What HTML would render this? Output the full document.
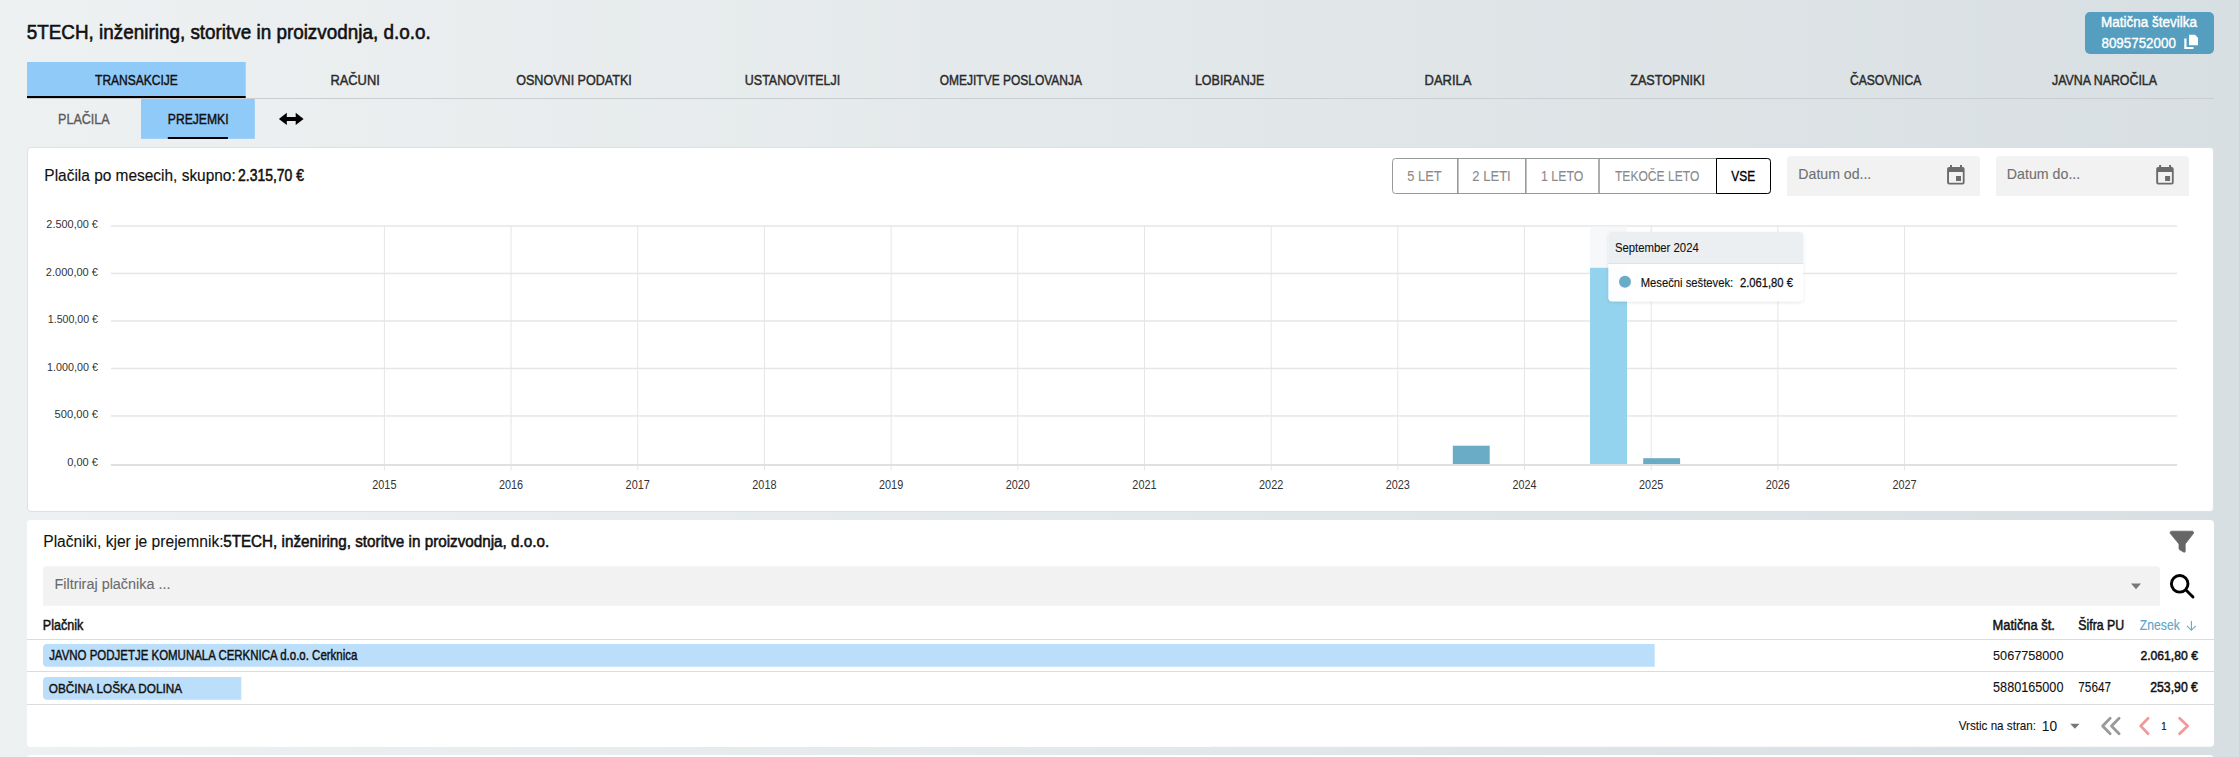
<!DOCTYPE html>
<html><head><meta charset="utf-8"><title>5TECH</title>
<style>
html,body{margin:0;padding:0;width:2239px;height:757px;overflow:hidden;}
body{background:linear-gradient(90deg,#eef1f2 0%,#d8dfe2 100%);font-family:"Liberation Sans",sans-serif;}
svg{position:absolute;left:0;top:0;}
text{font-family:"Liberation Sans",sans-serif;}
</style></head><body>
<svg width="2239" height="757" viewBox="0 0 2239 757">
<defs>
  <filter id="tsh" x="-10%" y="-20%" width="120%" height="150%">
    <feDropShadow dx="0" dy="1" stdDeviation="1.5" flood-color="#000" flood-opacity="0.12"/>
  </filter>
</defs>
<!-- badge -->
<rect x="2085" y="12" width="129" height="42" rx="5" fill="#559ebf"/>
<path d="M2185.4 38.5 V48 H2193.5" fill="none" stroke="#fff" stroke-width="2.2"/>
<path d="M2189 34.7 H2195 L2198 37.7 V45.3 H2189 Z" fill="#fff"/>

<!-- tabs -->
<rect x="27" y="62" width="218.7" height="34" fill="#90caf9"/>
<rect x="27" y="98" width="2187" height="1" fill="#c9ced2"/>
<rect x="27" y="96" width="218.7" height="2" fill="#000"/>
<rect x="141" y="99" width="113.8" height="39.8" fill="#90caf9"/>
<rect x="167.8" y="137" width="60.1" height="2" fill="#000"/>
<!-- double arrow -->
<path d="M278.9 118.9 L286.8 112.7 V117 H295.7 V112.7 L303.6 118.9 L295.7 125 V120.9 H286.8 V125 Z" fill="#000"/>

<!-- chart card -->
<rect x="27.5" y="147.5" width="2186" height="364" rx="3.5" fill="#fff" stroke="#e0e0e0" stroke-width="1"/>
<!-- button group -->
<rect x="1392.5" y="158.5" width="378" height="35" rx="3" fill="#fff" stroke="#999" stroke-width="1"/>
<rect x="1457" y="158.5" width="1.6" height="35" fill="#999"/>
<rect x="1525" y="158.5" width="1.6" height="35" fill="#999"/>
<rect x="1598.2" y="158.5" width="1.6" height="35" fill="#999"/>
<path d="M1716.5 158.5 H1767.5 A3 3 0 0 1 1770.5 161.5 V190.5 A3 3 0 0 1 1767.5 193.5 H1716.5 Z" fill="#fff" stroke="#000" stroke-width="1"/>
<!-- date inputs -->
<path d="M1787 160 A4 4 0 0 1 1791 156 H1976 A4 4 0 0 1 1980 160 V196 H1787 Z" fill="#f2f2f2"/>
<path d="M1996 160 A4 4 0 0 1 2000 156 H2185 A4 4 0 0 1 2189 160 V196 H1996 Z" fill="#f2f2f2"/>
<g id="cal1" fill="#6b6b6b">
  <path d="M1947.1 169 A2 2 0 0 1 1949.1 167 H1962.6 A2 2 0 0 1 1964.6 169 V182.6 A2 2 0 0 1 1962.6 184.6 H1949.1 A2 2 0 0 1 1947.1 182.6 Z M1949 172 V182.8 H1962.8 V172 Z" fill-rule="evenodd"/>
  <rect x="1950" y="165" width="2" height="3"/>
  <rect x="1960" y="165" width="2" height="3"/>
  <rect x="1956" y="176" width="5" height="5"/>
</g>
<use href="#cal1" x="209.1" y="0"/>

<!-- grid -->
<g fill="#e6e6e6">
  <rect x="111" y="225.2" width="2066" height="1.5"/>
  <rect x="111" y="272.7" width="2066" height="1.5"/>
  <rect x="111" y="320.2" width="2066" height="1.5"/>
  <rect x="111" y="367.7" width="2066" height="1.5"/>
  <rect x="111" y="415.2" width="2066" height="1.5"/>
</g>
<g fill="#e6e6e6" id="vgrid">
<rect x="383.90" y="226" width="1" height="244.6"/>
<rect x="510.58" y="226" width="1" height="244.6"/>
<rect x="637.26" y="226" width="1" height="244.6"/>
<rect x="763.94" y="226" width="1" height="244.6"/>
<rect x="890.62" y="226" width="1" height="244.6"/>
<rect x="1017.30" y="226" width="1" height="244.6"/>
<rect x="1143.98" y="226" width="1" height="244.6"/>
<rect x="1270.66" y="226" width="1" height="244.6"/>
<rect x="1397.34" y="226" width="1" height="244.6"/>
<rect x="1524.02" y="226" width="1" height="244.6"/>
<rect x="1650.70" y="226" width="1" height="244.6"/>
<rect x="1777.38" y="226" width="1" height="244.6"/>
<rect x="1904.06" y="226" width="1" height="244.6"/>
</g>
<rect x="1590" y="226.5" width="37" height="41.5" fill="#f6f8fa"/>
<rect x="1452.8" y="445.7" width="36.9" height="18.3" fill="#6aabc6"/>
<rect x="1590" y="267.8" width="37" height="196.2" fill="#94d3ee"/>
<rect x="1643.2" y="458.2" width="36.9" height="5.8" fill="#6aabc6"/>
<rect x="111" y="464" width="2066" height="2" fill="#e0e0e0"/>

<!-- tooltip -->
<g filter="url(#tsh)">
  <rect x="1608.3" y="232.1" width="195" height="69.3" rx="4" fill="#fff" fill-opacity="0.97"/>
</g>
<path d="M1608.3 263.4 V236.1 A4 4 0 0 1 1612.3 232.1 H1799.3 A4 4 0 0 1 1803.3 236.1 V263.4 Z" fill="#eceff1"/>
<rect x="1608.3" y="263" width="195" height="1" fill="#dfe3e6"/>
<circle cx="1625" cy="281.8" r="6" fill="#6aabc6"/>

<!-- table card -->
<rect x="27" y="520" width="1187" height="227" rx="4" fill="#fff"/>
<rect x="27" y="520" width="2187" height="226.8" rx="4" fill="#fff"/>
<rect x="27" y="755" width="2187" height="10" rx="4" fill="#fff"/>
<!-- filter funnel -->
<path d="M2171.5 531.2 H2192.2 A1.5 1.5 0 0 1 2193.3 533.6 L2185.2 544 V551.3 A1 1 0 0 1 2184 552.2 L2179.8 549.8 A1.5 1.5 0 0 1 2179 548.5 V544 L2170.4 533.6 A1.5 1.5 0 0 1 2171.5 531.2 Z" fill="#666" stroke="#666" stroke-width="0.8" stroke-linejoin="round"/>
<!-- filter input -->
<path d="M43 570.2 A4 4 0 0 1 47 566.2 H2156 A4 4 0 0 1 2160 570.2 V605.8 H43 Z" fill="#f2f2f2"/>
<path d="M2131 583.4 H2141 L2136 589.2 Z" fill="#777"/>
<!-- search -->
<circle cx="2179.7" cy="583.8" r="8.3" fill="none" stroke="#000" stroke-width="2.9"/>
<path d="M2186.2 590.3 L2193 597" stroke="#000" stroke-width="2.9" stroke-linecap="round"/>
<!-- table lines -->
<rect x="27" y="639" width="2187" height="1" fill="#dcdcdc"/>
<rect x="27" y="671" width="2187" height="1" fill="#dcdcdc"/>
<rect x="27" y="704" width="2187" height="1" fill="#dcdcdc"/>
<!-- sort arrow -->
<path d="M2191.4 621.1 V630.3 M2187 625.9 L2191.4 630.3 L2195.8 625.9" fill="none" stroke="#6aabcb" stroke-width="1.15"/>
<!-- row bars -->
<path d="M43 648 A4 4 0 0 1 47 644 H1654.7 V666.8 H47 A4 4 0 0 1 43 662.8 Z" fill="#bbdefb"/>
<path d="M43 681 A4 4 0 0 1 47 677 H241.3 V699.8 H47 A4 4 0 0 1 43 695.8 Z" fill="#bbdefb"/>
<!-- pagination -->
<path d="M2070.2 723.8 H2079.6 L2074.9 728.7 Z" fill="#777"/>
<g fill="none" stroke-width="2.8" stroke-linecap="round" stroke-linejoin="round">
  <path d="M2110.2 718.3 L2102.6 725.9 L2110.2 733.7 M2119.1 718.3 L2111.5 725.9 L2119.1 733.7" stroke="#9a9a9a"/>
  <path d="M2148.1 718.3 L2140.6 725.9 L2148.1 733.7" stroke="#f09a9a"/>
  <path d="M2179.6 718.3 L2187.7 725.9 L2179.6 733.7" stroke="#f09a9a"/>
</g>

<text x="26.74" y="39.40" font-size="20.43" font-weight="400" fill="#111" stroke="#111" stroke-width="0.6" textLength="403.91" lengthAdjust="spacingAndGlyphs">5TECH, inženiring, storitve in proizvodnja, d.o.o.</text>
<text x="2100.92" y="27.20" font-size="14.49" font-weight="400" fill="#fff" stroke="#fff" stroke-width="0.4" textLength="96.03" lengthAdjust="spacingAndGlyphs">Matična številka</text>
<text x="2101.46" y="48.00" font-size="14.49" font-weight="400" fill="#fff" stroke="#fff" stroke-width="0.35" textLength="74.42" lengthAdjust="spacingAndGlyphs">8095752000</text>
<text x="95.11" y="85.10" font-size="14.93" font-weight="400" fill="#111" stroke="#111" stroke-width="0.45" textLength="82.74" lengthAdjust="spacingAndGlyphs">TRANSAKCIJE</text>
<text x="330.42" y="85.10" font-size="14.93" font-weight="400" fill="#2a2a2a" stroke="#2a2a2a" stroke-width="0.45" textLength="49.36" lengthAdjust="spacingAndGlyphs">RAČUNI</text>
<text x="516.18" y="85.10" font-size="14.93" font-weight="400" fill="#2a2a2a" stroke="#2a2a2a" stroke-width="0.45" textLength="115.67" lengthAdjust="spacingAndGlyphs">OSNOVNI PODATKI</text>
<text x="744.87" y="85.10" font-size="14.93" font-weight="400" fill="#2a2a2a" stroke="#2a2a2a" stroke-width="0.45" textLength="95.33" lengthAdjust="spacingAndGlyphs">USTANOVITELJI</text>
<text x="939.71" y="85.10" font-size="14.93" font-weight="400" fill="#2a2a2a" stroke="#2a2a2a" stroke-width="0.45" textLength="142.30" lengthAdjust="spacingAndGlyphs">OMEJITVE POSLOVANJA</text>
<text x="1194.90" y="85.10" font-size="14.93" font-weight="400" fill="#2a2a2a" stroke="#2a2a2a" stroke-width="0.45" textLength="69.42" lengthAdjust="spacingAndGlyphs">LOBIRANJE</text>
<text x="1424.61" y="85.10" font-size="14.93" font-weight="400" fill="#2a2a2a" stroke="#2a2a2a" stroke-width="0.45" textLength="46.80" lengthAdjust="spacingAndGlyphs">DARILA</text>
<text x="1630.22" y="85.10" font-size="14.93" font-weight="400" fill="#2a2a2a" stroke="#2a2a2a" stroke-width="0.45" textLength="74.79" lengthAdjust="spacingAndGlyphs">ZASTOPNIKI</text>
<text x="1849.89" y="85.10" font-size="14.93" font-weight="400" fill="#2a2a2a" stroke="#2a2a2a" stroke-width="0.45" textLength="71.47" lengthAdjust="spacingAndGlyphs">ČASOVNICA</text>
<text x="2052.12" y="85.10" font-size="14.93" font-weight="400" fill="#2a2a2a" stroke="#2a2a2a" stroke-width="0.45" textLength="104.85" lengthAdjust="spacingAndGlyphs">JAVNA NAROČILA</text>
<text x="58.10" y="124.10" font-size="14.49" font-weight="400" fill="#5a5a5a" stroke="#5a5a5a" stroke-width="0.35" textLength="51.62" lengthAdjust="spacingAndGlyphs">PLAČILA</text>
<text x="167.78" y="124.10" font-size="14.49" font-weight="400" fill="#111" stroke="#111" stroke-width="0.45" textLength="60.79" lengthAdjust="spacingAndGlyphs">PREJEMKI</text>
<text x="44.36" y="180.60" font-size="15.72" font-weight="400" fill="#111" stroke="#111" stroke-width="0.15" textLength="191.39" lengthAdjust="spacingAndGlyphs">Plačila po mesecih, skupno:</text>
<text x="238.05" y="180.60" font-size="15.72" font-weight="400" fill="#111" stroke="#111" stroke-width="0.55" textLength="65.85" lengthAdjust="spacingAndGlyphs">2.315,70 €</text>
<text x="1407.29" y="181.10" font-size="14.93" font-weight="400" fill="#8a8a8a" stroke="#8a8a8a" stroke-width="0.1" textLength="34.28" lengthAdjust="spacingAndGlyphs">5 LET</text>
<text x="1472.35" y="181.10" font-size="14.93" font-weight="400" fill="#8a8a8a" stroke="#8a8a8a" stroke-width="0.1" textLength="38.40" lengthAdjust="spacingAndGlyphs">2 LETI</text>
<text x="1541.08" y="181.10" font-size="14.93" font-weight="400" fill="#8a8a8a" stroke="#8a8a8a" stroke-width="0.1" textLength="42.21" lengthAdjust="spacingAndGlyphs">1 LETO</text>
<text x="1614.96" y="181.10" font-size="14.93" font-weight="400" fill="#8a8a8a" stroke="#8a8a8a" stroke-width="0.1" textLength="84.42" lengthAdjust="spacingAndGlyphs">TEKOČE LETO</text>
<text x="1731.30" y="181.10" font-size="14.93" font-weight="400" fill="#000" stroke="#000" stroke-width="0.35" textLength="23.80" lengthAdjust="spacingAndGlyphs">VSE</text>
<text x="1798.37" y="178.80" font-size="14.78" font-weight="400" fill="#707070" stroke="#707070" stroke-width="0.1" textLength="72.87" lengthAdjust="spacingAndGlyphs">Datum od...</text>
<text x="2006.86" y="178.80" font-size="14.78" font-weight="400" fill="#707070" stroke="#707070" stroke-width="0.1" textLength="73.38" lengthAdjust="spacingAndGlyphs">Datum do...</text>
<text x="46.35" y="228.20" font-size="11.59" font-weight="400" fill="#333" textLength="51.57" lengthAdjust="spacingAndGlyphs">2.500,00 €</text>
<text x="45.85" y="275.70" font-size="11.59" font-weight="400" fill="#333" textLength="52.07" lengthAdjust="spacingAndGlyphs">2.000,00 €</text>
<text x="47.80" y="323.20" font-size="11.59" font-weight="400" fill="#333" textLength="50.11" lengthAdjust="spacingAndGlyphs">1.500,00 €</text>
<text x="47.09" y="370.70" font-size="11.59" font-weight="400" fill="#333" textLength="50.83" lengthAdjust="spacingAndGlyphs">1.000,00 €</text>
<text x="54.55" y="418.20" font-size="11.59" font-weight="400" fill="#333" textLength="43.37" lengthAdjust="spacingAndGlyphs">500,00 €</text>
<text x="67.21" y="465.70" font-size="11.59" font-weight="400" fill="#333" textLength="30.71" lengthAdjust="spacingAndGlyphs">0,00 €</text>
<text x="372.26" y="489.00" font-size="12.17" font-weight="400" fill="#333" textLength="24.19" lengthAdjust="spacingAndGlyphs">2015</text>
<text x="498.94" y="489.00" font-size="12.17" font-weight="400" fill="#333" textLength="24.19" lengthAdjust="spacingAndGlyphs">2016</text>
<text x="625.62" y="489.00" font-size="12.17" font-weight="400" fill="#333" textLength="24.25" lengthAdjust="spacingAndGlyphs">2017</text>
<text x="752.30" y="489.00" font-size="12.17" font-weight="400" fill="#333" textLength="24.19" lengthAdjust="spacingAndGlyphs">2018</text>
<text x="878.98" y="489.00" font-size="12.17" font-weight="400" fill="#333" textLength="24.25" lengthAdjust="spacingAndGlyphs">2019</text>
<text x="1005.66" y="489.00" font-size="12.17" font-weight="400" fill="#333" textLength="24.13" lengthAdjust="spacingAndGlyphs">2020</text>
<text x="1132.34" y="489.00" font-size="12.17" font-weight="400" fill="#333" textLength="24.25" lengthAdjust="spacingAndGlyphs">2021</text>
<text x="1259.02" y="489.00" font-size="12.17" font-weight="400" fill="#333" textLength="24.25" lengthAdjust="spacingAndGlyphs">2022</text>
<text x="1385.70" y="489.00" font-size="12.17" font-weight="400" fill="#333" textLength="24.19" lengthAdjust="spacingAndGlyphs">2023</text>
<text x="1512.38" y="489.00" font-size="12.17" font-weight="400" fill="#333" textLength="24.02" lengthAdjust="spacingAndGlyphs">2024</text>
<text x="1639.06" y="489.00" font-size="12.17" font-weight="400" fill="#333" textLength="24.19" lengthAdjust="spacingAndGlyphs">2025</text>
<text x="1765.74" y="489.00" font-size="12.17" font-weight="400" fill="#333" textLength="24.19" lengthAdjust="spacingAndGlyphs">2026</text>
<text x="1892.42" y="489.00" font-size="12.17" font-weight="400" fill="#333" textLength="24.25" lengthAdjust="spacingAndGlyphs">2027</text>
<text x="1614.89" y="252.10" font-size="12.61" font-weight="400" fill="#111" stroke="#111" stroke-width="0.1" textLength="83.91" lengthAdjust="spacingAndGlyphs">September 2024</text>
<text x="1640.70" y="287.20" font-size="13.04" font-weight="400" fill="#111" stroke="#111" stroke-width="0.15" textLength="92.49" lengthAdjust="spacingAndGlyphs">Mesečni seštevek:</text>
<text x="1739.94" y="287.20" font-size="13.04" font-weight="400" fill="#111" stroke="#111" stroke-width="0.3" textLength="52.99" lengthAdjust="spacingAndGlyphs">2.061,80 €</text>
<text x="43.25" y="547.00" font-size="15.80" font-weight="400" fill="#111" stroke="#111" stroke-width="0.1" textLength="180.32" lengthAdjust="spacingAndGlyphs">Plačniki, kjer je prejemnik:</text>
<text x="223.19" y="547.00" font-size="15.80" font-weight="400" fill="#111" stroke="#111" stroke-width="0.55" textLength="325.95" lengthAdjust="spacingAndGlyphs">5TECH, inženiring, storitve in proizvodnja, d.o.o.</text>
<text x="54.45" y="589.20" font-size="15.36" font-weight="400" fill="#6b6b6b" stroke="#6b6b6b" stroke-width="0.1" textLength="116.02" lengthAdjust="spacingAndGlyphs">Filtriraj plačnika ...</text>
<text x="42.79" y="630.40" font-size="14.64" font-weight="400" fill="#111" stroke="#111" stroke-width="0.5" textLength="40.54" lengthAdjust="spacingAndGlyphs">Plačnik</text>
<text x="1992.57" y="630.40" font-size="14.49" font-weight="400" fill="#111" stroke="#111" stroke-width="0.5" textLength="62.36" lengthAdjust="spacingAndGlyphs">Matična št.</text>
<text x="2078.35" y="630.40" font-size="14.49" font-weight="400" fill="#111" stroke="#111" stroke-width="0.5" textLength="45.91" lengthAdjust="spacingAndGlyphs">Šifra PU</text>
<text x="2139.83" y="630.10" font-size="14.49" font-weight="400" fill="#5fa5c8" stroke="#5fa5c8" stroke-width="0.15" textLength="39.90" lengthAdjust="spacingAndGlyphs">Znesek</text>
<text x="49.13" y="660.30" font-size="14.20" font-weight="400" fill="#111" stroke="#111" stroke-width="0.45" textLength="308.23" lengthAdjust="spacingAndGlyphs">JAVNO PODJETJE KOMUNALA CERKNICA d.o.o. Cerknica</text>
<text x="1993.09" y="660.20" font-size="13.62" font-weight="400" fill="#111" stroke="#111" stroke-width="0.1" textLength="70.36" lengthAdjust="spacingAndGlyphs">5067758000</text>
<text x="2140.39" y="660.20" font-size="13.62" font-weight="400" fill="#111" stroke="#111" stroke-width="0.5" textLength="57.54" lengthAdjust="spacingAndGlyphs">2.061,80 €</text>
<text x="48.78" y="692.80" font-size="13.48" font-weight="400" fill="#111" stroke="#111" stroke-width="0.45" textLength="133.29" lengthAdjust="spacingAndGlyphs">OBČINA LOŠKA DOLINA</text>
<text x="1993.09" y="692.30" font-size="13.77" font-weight="400" fill="#111" stroke="#111" stroke-width="0.1" textLength="70.36" lengthAdjust="spacingAndGlyphs">5880165000</text>
<text x="2078.31" y="692.30" font-size="13.77" font-weight="400" fill="#111" stroke="#111" stroke-width="0.1" textLength="32.84" lengthAdjust="spacingAndGlyphs">75647</text>
<text x="2150.19" y="692.30" font-size="13.77" font-weight="400" fill="#111" stroke="#111" stroke-width="0.5" textLength="47.75" lengthAdjust="spacingAndGlyphs">253,90 €</text>
<text x="1958.70" y="730.00" font-size="12.46" font-weight="400" fill="#111" stroke="#111" stroke-width="0.1" textLength="77.32" lengthAdjust="spacingAndGlyphs">Vrstic na stran:</text>
<text x="2041.77" y="730.50" font-size="14.20" font-weight="400" fill="#111" textLength="15.22" lengthAdjust="spacingAndGlyphs">10</text>
<text x="2161.28" y="729.90" font-size="11.45" font-weight="400" fill="#111" stroke="#111" stroke-width="0.2" textLength="5.37" lengthAdjust="spacingAndGlyphs">1</text>
</svg>
</body></html>
